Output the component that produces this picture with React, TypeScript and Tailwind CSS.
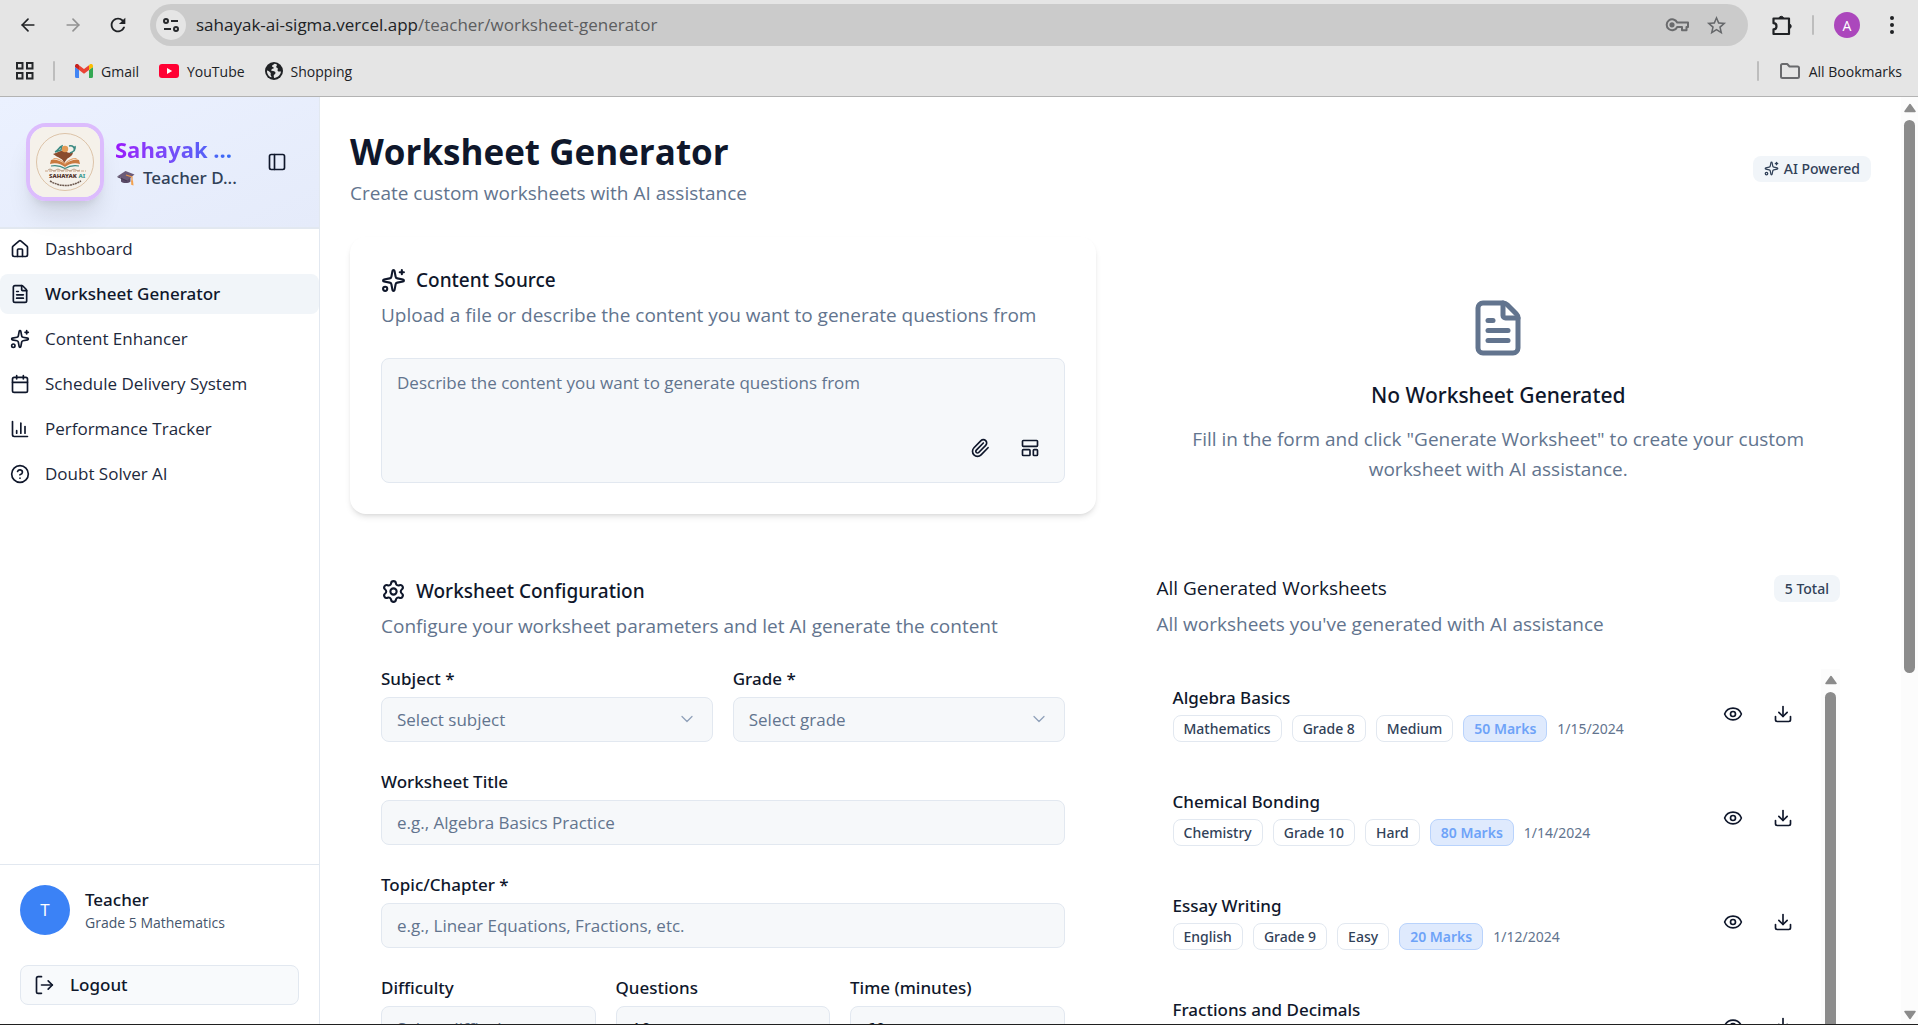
import React from "react";
import {
  ArrowLeft,
  ArrowRight,
  Calendar,
  ChartColumn,
  ChevronDown,
  CircleQuestionMark,
  Download,
  Eye,
  FileText,
  House,
  LayoutTemplate,
  PanelLeft,
  Paperclip,
  Settings,
} from "lucide-react";
import { MdOutlineStarBorder, MdRefresh } from "react-icons/md";

const SparkleIcon = ({ className }: { className: string }) => (
  <svg viewBox="0 0 24 24" className={className} fill="none" stroke="currentColor" strokeWidth="2" strokeLinecap="round" strokeLinejoin="round" aria-hidden="true">
    <path d="M11.017 2.814a1 1 0 0 1 1.966 0l1.051 5.558a2 2 0 0 0 1.594 1.594l5.558 1.051a1 1 0 0 1 0 1.966l-5.558 1.051a2 2 0 0 0-1.594 1.594l-1.051 5.558a1 1 0 0 1-1.966 0l-1.051-5.558a2 2 0 0 0-1.594-1.594l-5.558-1.051a1 1 0 0 1 0-1.966l5.558-1.051a2 2 0 0 0 1.594-1.594z" />
    <path d="M20 2v4" />
    <path d="M22 4h-4" />
    <circle cx="4" cy="20" r="2" />
  </svg>
);

const TuneIcon = () => (
  <svg viewBox="0 0 18 18" className="size-[18px]" fill="none" stroke="#26282b" strokeWidth="2" aria-hidden="true">
    <circle cx="4" cy="5" r="2" />
    <path d="M9 5h7M2 13h7" />
    <circle cx="14" cy="13" r="2" />
  </svg>
);

const KeyIcon = () => (
  <svg viewBox="0 0 24 16" className="h-4 w-6" fill="none" stroke="#6a6b6d" strokeWidth="2" strokeLinejoin="round" aria-hidden="true">
    <path d="M12.2 5.5A5.5 5.5 0 1 0 12.2 10H17v3.2h4.500V10H23V5.500z" />
    <circle cx="7" cy="7.800" r="1.600" fill="#6a6b6d" />
  </svg>
);

const PuzzleIcon = () => (
  <svg viewBox="0 0 24 24" className="size-6" fill="none" stroke="#202225" strokeWidth="2.200" strokeLinejoin="round" aria-hidden="true">
    <path d="M3.500 5.500h15.500v15.500h-15.500v-4.600c2 0 3-1.400 3-3.100s-1-3.100-3-3.100z" />
    <path d="M9 5a2.400 2.400 0 0 1 4.600 0M19.500 11a2.400 2.400 0 0 1 0 4.600" fill="#202225" strokeWidth="1" />
  </svg>
);

const AppsIcon = () => (
  <svg viewBox="0 0 20 20" className="size-5" fill="none" stroke="#26282b" strokeWidth="2" aria-hidden="true">
    <rect x="2" y="2" width="5.500" height="5.500" />
    <rect x="12" y="2" width="5.500" height="5.500" />
    <rect x="2" y="12" width="5.500" height="5.500" />
    <rect x="12" y="12" width="5.500" height="5.500" />
  </svg>
);

const GmailIcon = () => (
  <svg viewBox="0 0 18 14" className="h-3.5 w-[18px]" aria-hidden="true">
    <path d="M0 3v9.500A1.500 1.500 0 0 0 1.500 14H4V6z" fill="#4285f4" />
    <path d="M18 3v9.500a1.500 1.500 0 0 1-1.500 1.500H14V6z" fill="#34a853" />
    <path d="M14 1.500V6l4-3V2A2 2 0 0 0 14.600.500z" fill="#fbbc04" />
    <path d="M4 6V1.200L9 5l5-3.800V6L9 9.800z" fill="#ea4335" />
    <path d="M0 2v1l4 3V1.200L3.400.500A2 2 0 0 0 0 2z" fill="#c5221f" />
  </svg>
);

const YouTubeIcon = () => (
  <svg viewBox="0 0 20 14" className="h-3.5 w-5" aria-hidden="true">
    <rect width="20" height="14" rx="3" fill="#ff0033" />
    <path d="M8 4l5.200 3L8 10z" fill="#fff" />
  </svg>
);

const GlobeIcon = () => (
  <svg viewBox="0 0 18 18" className="size-[18px]" aria-hidden="true">
    <circle cx="9" cy="9" r="9" fill="#202225" />
    <path d="M9.500 1.800c-1 1-2.700 1.200-2.500 2.500.1.900 1.500.5 1.700 1.500.2 1.200-2.400 1-2.500 2.500-.1 1.200 2.800.6 3.800 1.500 1 .9.400 2.300-.6 2.800-.9.500-.8 2-.3 3.400 3.500-.2 6.500-2.700 6.900-6.400-1.400-.4-2.400.4-3.200-.6-.7-.9.300-1.700 0-2.600-.3-.8-1.500-.5-1.600-1.500 0-1 .9-1.200.9-2.100-.8-.6-1.600-.9-2.600-1z" fill="#e5e5e5" />
    <path d="M2 8.400c1.200.1 2.700 1.400 3.500 2.300.8 1-.3 1.700.3 2.700.3.500.8 1.200.7 1.900C3.700 14.400 1.700 11.500 2 8.400z" fill="#e5e5e5" />
  </svg>
);

const FolderIcon = () => (
  <svg viewBox="0 0 22 18" className="h-[18px] w-[22px]" fill="none" stroke="#696a6d" strokeWidth="2" strokeLinejoin="round" aria-hidden="true">
    <path d="M2 3.500A1.500 1.500 0 0 1 3.500 2h4.700l2.300 2.500h8A1.500 1.500 0 0 1 20 6v8.500a1.500 1.500 0 0 1-1.500 1.500h-15A1.500 1.500 0 0 1 2 14.500z" />
  </svg>
);

const CapIcon = () => (
  <svg viewBox="0 0 18 16" className="h-4 w-[18px] shrink-0" aria-hidden="true">
    <path d="M4 7v4.500c2 2 7.500 2 9.500 0V7z" fill="#5a4a66" />
    <path d="M.5 6.200L8.500 1l9 3.600-7.500 6z" fill="#6b5b78" />
    <path d="M.5 6.200L10 10.600v1L.5 7.200z" fill="#463952" />
    <path d="M9 5l6 2v5" stroke="#e8964a" strokeWidth="1.200" fill="none" />
    <path d="M14.200 10.500h1.800l.5 5-2.300-.8z" fill="#f3a24f" />
  </svg>
);

const SahayakLogo = () => (
  <svg viewBox="0 0 70 70" className="size-full" role="img" aria-label="Sahayak AI logo">
    <rect width="70" height="70" fill="#f5f1ea" />
    <circle cx="35" cy="35" r="28.500" fill="none" stroke="#dcc3a8" strokeWidth="1" />
    <path d="M20 37c6-2 11 0 15 3 4-3 9-5 15-3l-1-4c-5-1-10 1-14 4-4-3-9-5-14-4z" fill="#c9793f" />
    <path d="M22 33c5-2 10 1 13 5 3-4 8-7 13-5l-2-2c-5 0-8 2-11 5-3-3-6-5-11-5z" fill="#e3a26c" />
    <path d="M21 39c6-1 10 0 14 2.500 4-2.500 8-3.500 14-2.500" fill="none" stroke="#3d8b83" strokeWidth="1.200" />
    <path d="M23 27c5-1 7-4 11-3 3 1 6 3 9 1 0 4-4 5-6 7l-3 4c-1-5-6-5-11-9z" fill="#8a4b2e" />
    <path d="M25 25c3-1 4-5 7-6l-1 4zM40 26c3-1 6-3 5-7M39 19c4-1 6 2 5 4" fill="none" stroke="#3d8b83" strokeWidth="1.500" />
    <circle cx="35" cy="22" r="3.200" fill="#e39a55" />
    <path d="M15 44h41" stroke="#c9a487" strokeWidth="1" strokeDasharray="3 1" />
    <path d="M18 43q2-2 4 0t4 0 4 0 4 0 4 0 4 0 4 0 4 0" stroke="#bba08a" strokeWidth="1" fill="none" />
    <text x="19" y="51" fontFamily="Noto Sans, sans-serif" fontSize="6" fontWeight="800" fill="#4b2c24">
      SAHAYAK <tspan fill="#3d9a90">AI</tspan>
    </text>
    <path d="M20 54q15 9 31 0" fill="none" stroke="#6d5a50" strokeWidth="1.500" strokeDasharray="2 .600" />
  </svg>
);

const bookmarks = [
  { label: "Gmail", icon: <GmailIcon /> },
  { label: "YouTube", icon: <YouTubeIcon /> },
  { label: "Shopping", icon: <GlobeIcon /> },
];

function BrowserChrome() {
  return (
    <header className="shrink-0 border-b border-[#b3b3b3] bg-[#e5e5e5] text-[#202225]">
      <div className="flex items-center pt-1 pl-[18px]">
        <button aria-label="Back" className="flex w-[45px]"><ArrowLeft className="size-5" /></button>
        <button aria-label="Forward" className="flex w-11 text-[#929292]"><ArrowRight className="size-5" /></button>
        <button aria-label="Reload" className="flex w-[43px]"><MdRefresh className="size-[22px]" /></button>
        <div className="flex h-[42px] flex-1 items-center rounded-full bg-[#cbcbcb] pr-5 pl-1.5">
          <button aria-label="Site information" className="flex size-[30px] items-center justify-center rounded-full bg-[#e5e5e5]"><TuneIcon /></button>
          <p className="ml-2.5 flex-1 text-[17px] leading-6">
            sahayak-ai-sigma.vercel.app<span className="text-[#5c5d5f]">/teacher/worksheet-generator</span>
          </p>
          <button aria-label="Passwords" className="mr-4"><KeyIcon /></button>
          <button aria-label="Bookmark this page" className="text-[#66686b]"><MdOutlineStarBorder className="size-[23px]" /></button>
        </div>
        <button aria-label="Extensions" className="ml-[22px]"><PuzzleIcon /></button>
        <span className="ml-[18px] h-5 w-0.5 rounded bg-[#bdbdbd]" />
        <button aria-label="Profile" className="ml-5 flex size-[26px] items-center justify-center rounded-full bg-[#ab47bc] text-[14px] text-white">A</button>
        <button aria-label="Menu" className="mr-4 ml-[22px] flex w-5 flex-col items-center gap-[3px]">
          <span className="size-1 rounded-full bg-[#202225]" />
          <span className="size-1 rounded-full bg-[#202225]" />
          <span className="size-1 rounded-full bg-[#202225]" />
        </button>
      </div>
      <nav aria-label="Bookmarks" className="flex h-[50px] items-center pr-4 pl-[15px] text-[14px]">
        <button aria-label="Apps"><AppsIcon /></button>
        <span className="mr-5 ml-[18px] h-5 w-0.5 rounded bg-[#bdbdbd]" />
        <ul className="flex flex-1 items-center gap-5">
          {bookmarks.map((b) => (
            <li key={b.label}>
              <a href="#" className="flex items-center gap-2">{b.icon}{b.label}</a>
            </li>
          ))}
        </ul>
        <span className="mr-5 h-5 w-0.5 rounded bg-[#bdbdbd]" />
        <button className="flex items-center gap-2"><FolderIcon />All Bookmarks</button>
      </nav>
    </header>
  );
}

const navItems = [
  { label: "Dashboard", Icon: House },
  { label: "Worksheet Generator", Icon: FileText, active: true },
  { label: "Content Enhancer", Icon: SparkleIcon },
  { label: "Schedule Delivery System", Icon: Calendar },
  { label: "Performance Tracker", Icon: ChartColumn },
  { label: "Doubt Solver AI", Icon: CircleQuestionMark },
];

function Sidebar() {
  return (
    <aside className="flex w-80 shrink-0 flex-col border-r border-slate-200">
      <div className="flex items-center border-b-2 border-slate-200 bg-gradient-to-br from-[#ebf1ff] to-[#e5ebfa] py-[26px] pr-8 pl-[26px]">
        <div className="size-[78px] shrink-0 overflow-hidden rounded-[20px] border-4 border-[#dcbcfd] shadow-xl">
          <SahayakLogo />
        </div>
        <div className="ml-[11px] pt-1">
          <p className="w-fit bg-gradient-to-r from-[#9a12fb] to-[#2f6bf6] bg-clip-text text-[22px] leading-7 font-bold whitespace-nowrap text-transparent">Sahayak ...</p>
          <p className="ml-0.5 flex items-center gap-2 font-['Noto_Sans',sans-serif] text-[17px] leading-[30px] font-medium whitespace-nowrap text-slate-700">
            <CapIcon />
            <span>Teacher D...</span>
          </p>
        </div>
        <button aria-label="Toggle sidebar" className="ml-auto"><PanelLeft className="size-5" /></button>
      </div>
      <nav aria-label="Main" className="flex flex-1 flex-col gap-[5px]">
        {navItems.map(({ label, Icon, active }) => (
          <a
            key={label}
            href="#"
            className={
              active
                ? "flex h-10 items-center gap-[15px] rounded-lg bg-slate-100 px-2.5 font-['Noto_Sans',sans-serif] text-[17px] font-medium"
                : "flex h-10 items-center gap-[15px] rounded-lg px-2.5 text-[17px] text-slate-800"
            }
          >
            <Icon className="size-5 text-slate-900" />
            {label}
          </a>
        ))}
      </nav>
      <div className="border-t border-slate-200 px-5 pt-5 pb-[19px]">
        <div className="mb-[30px] flex items-center gap-[15px]">
          <div className="flex size-[50px] items-center justify-center rounded-full bg-[#3b82f6] text-[17px] text-white">T</div>
          <div className="pt-0.5">
            <p className="font-['Noto_Sans',sans-serif] text-[17px] leading-6 font-medium">Teacher</p>
            <p className="text-[14px] leading-[22px] text-slate-600">Grade 5 Mathematics</p>
          </div>
        </div>
        <button className="flex h-10 w-full items-center gap-4 rounded-lg border border-slate-200 bg-slate-50 px-[13px] font-['Noto_Sans',sans-serif] text-[17px] font-medium">
          <svg viewBox="0 0 24 24" className="size-5" fill="none" stroke="currentColor" strokeWidth="2" strokeLinecap="round" strokeLinejoin="round" aria-hidden="true">
            <path d="m17 17 5-5-5-5" />
            <path d="M22 12H9" />
            <path d="M9 22H5a2 2 0 0 1-2-2V4a2 2 0 0 1 2-2h4" />
          </svg>
          Logout
        </button>
      </div>
    </aside>
  );
}

const labelClass = "block font-['Noto_Sans',sans-serif] text-[17px] leading-[25px] font-medium";

const controlClass =
  "mt-1.5 block h-[45px] w-full appearance-none rounded-lg border border-slate-200 bg-[#f6f8fa] px-[15px] text-[17px] placeholder:text-slate-500";

function SelectField({ id, label, placeholder }: { id: string; label: string; placeholder: string }) {
  return (
    <div className="flex-1">
      <label htmlFor={id} className={labelClass}>{label}</label>
      <div className="relative">
        <select id={id} className={controlClass + " text-slate-500"}>
          <option>{placeholder}</option>
        </select>
        <ChevronDown className="pointer-events-none absolute top-3 right-4 size-5 text-slate-400" strokeWidth={1.5} />
      </div>
    </div>
  );
}

function InputField({ id, label, placeholder, value }: { id: string; label: string; placeholder?: string; value?: string }) {
  return (
    <div className="flex-1">
      <label htmlFor={id} className={labelClass}>{label}</label>
      <input id={id} placeholder={placeholder} defaultValue={value} className={controlClass} />
    </div>
  );
}

const worksheets = [
  { title: "Algebra Basics", tags: ["Mathematics", "Grade 8", "Medium"], marks: 50, date: "1/15/2024" },
  { title: "Chemical Bonding", tags: ["Chemistry", "Grade 10", "Hard"], marks: 80, date: "1/14/2024" },
  { title: "Essay Writing", tags: ["English", "Grade 9", "Easy"], marks: 20, date: "1/12/2024" },
  { title: "Fractions and Decimals", tags: ["Mathematics", "Grade 5", "Easy"], marks: 30, date: "1/10/2024" },
];

const Triangle = ({ className }: { className: string }) => (
  <svg viewBox="0 0 12 10" className={className} aria-hidden="true">
    <path d="M6 1.500L11 8.500H1z" fill="#8b8b8b" stroke="#8b8b8b" strokeWidth="1.500" strokeLinejoin="round" />
  </svg>
);

function WorksheetList() {
  return (
    <section className="border border-transparent px-[30px] pt-[30px]">
      <div className="flex h-[27px] items-center justify-between">
        <h2 className="text-[19px]">All Generated Worksheets</h2>
        <span className="rounded-lg bg-slate-100 px-[11px] font-['Noto_Sans',sans-serif] text-[14px] leading-[27px] font-medium text-slate-700">5 Total</span>
      </div>
      <p className="mt-2 text-[19px] leading-7 text-slate-500">All worksheets you've generated with AI assistance</p>
      <div className="mt-[31px] flex">
        <ul className="flex flex-1 flex-col gap-[15px]">
          {worksheets.map((w) => (
            <li key={w.title} className="flex items-center justify-between p-4">
              <div>
                <h3 className="font-['Noto_Sans',sans-serif] text-[17px] leading-[26px] font-medium">{w.title}</h3>
                <div className="mt-1 flex items-center gap-2.5 font-['Noto_Sans',sans-serif] text-[14px] leading-[25px]">
                  {w.tags.map((t) => (
                    <span key={t} className="rounded-lg border border-slate-200 px-2.5 font-medium text-slate-700">{t}</span>
                  ))}
                  <span className="rounded-lg border border-[#b9d3fc] bg-[#dfeafd] px-2.5 font-semibold text-[#6ea3f8]">{w.marks} Marks</span>
                  <span className="text-slate-500">{w.date}</span>
                </div>
              </div>
              <div className="flex gap-[30px] pr-3">
                <button aria-label={"View " + w.title}><Eye className="size-5" /></button>
                <button aria-label={"Download " + w.title}><Download className="size-5" /></button>
              </div>
            </li>
          ))}
        </ul>
        <div className="flex w-[19px] flex-col items-center bg-[#fcfcfc] pt-1.5" aria-hidden="true">
          <Triangle className="h-2.5 w-3" />
          <div className="mt-[7px] w-[11px] flex-1 rounded-full bg-[#8b8b8b]" />
        </div>
      </div>
    </section>
  );
}

export default function App() {
  return (
    <div className="flex h-screen flex-col overflow-hidden border-b border-[#202020] bg-white font-['Open_Sans',sans-serif] text-slate-900">
      <BrowserChrome />
      <div className="flex min-h-0 flex-1">
        <Sidebar />
        <main className="min-w-0 flex-1 overflow-hidden p-[30px]">
          <div className="mb-[27px] flex items-center justify-between">
            <div>
              <h1 className="text-[35px] leading-[50px] font-bold">Worksheet Generator</h1>
              <p className="text-[19px] leading-[33px] text-slate-500">Create custom worksheets with AI assistance</p>
            </div>
            <span className="flex h-[26px] items-center gap-[5px] rounded-lg bg-slate-100 px-[11px] font-['Noto_Sans',sans-serif] text-[14px] font-medium text-slate-700">
              <SparkleIcon className="size-[15px]" />
              AI Powered
            </span>
          </div>
          <div className="grid grid-cols-2 gap-[30px]">
            <div className="flex flex-col gap-[34px]">
              <section className="rounded-2xl border border-transparent p-[30px] shadow-md">
                <h2 className="flex h-[25px] items-center gap-2.5 font-['Noto_Sans',sans-serif] text-[19px] font-medium">
                  <SparkleIcon className="size-[25px]" />
                  Content Source
                </h2>
                <p className="mt-2 text-[19px] leading-7 text-slate-500">Upload a file or describe the content you want to generate questions from</p>
                <div className="relative mt-[29px]">
                  <textarea
                    aria-label="Content description"
                    placeholder="Describe the content you want to generate questions from"
                    className="block h-[125px] w-full resize-none rounded-lg border border-slate-200 bg-[#f6f8fa] px-[15px] py-2.5 text-[17px] leading-[27px] placeholder:text-slate-500"
                  />
                  <div className="absolute right-[25px] bottom-[25px] flex gap-[30px]">
                    <button aria-label="Attach file"><Paperclip className="size-5" /></button>
                    <button aria-label="Templates"><LayoutTemplate className="size-5" /></button>
                  </div>
                </div>
              </section>
              <section className="border border-transparent px-[30px] pt-[30px]">
                <h2 className="flex h-[25px] items-center gap-2.5 font-['Noto_Sans',sans-serif] text-[19px] font-medium">
                  <Settings className="size-[25px]" />
                  Worksheet Configuration
                </h2>
                <p className="mt-2 text-[19px] leading-7 text-slate-500">Configure your worksheet parameters and let AI generate the content</p>
                <form className="mt-[26px] flex flex-col gap-[27px]">
                  <div className="flex gap-5">
                    <SelectField id="subject" label="Subject *" placeholder="Select subject" />
                    <SelectField id="grade" label="Grade *" placeholder="Select grade" />
                  </div>
                  <InputField id="title" label="Worksheet Title" placeholder="e.g., Algebra Basics Practice" />
                  <InputField id="topic" label="Topic/Chapter *" placeholder="e.g., Linear Equations, Fractions, etc." />
                  <div className="grid grid-cols-3 gap-5">
                    <InputField id="difficulty" label="Difficulty" placeholder="Select difficulty" />
                    <InputField id="questions" label="Questions" value="10" />
                    <InputField id="time" label="Time (minutes)" value="60" />
                  </div>
                </form>
              </section>
            </div>
            <div className="flex flex-col gap-[30px]">
              <section className="flex flex-col items-center border border-transparent px-[30px] pt-[60px] pb-[29px] text-center">
                <FileText className="size-[60px] text-slate-500" />
                <h2 className="mt-5 font-['Noto_Sans',sans-serif] text-[21px] leading-[35px] font-medium">No Worksheet Generated</h2>
                <p className="mt-[11px] max-w-[640px] text-[19px] leading-[30px] text-slate-500">
                  Fill in the form and click "Generate Worksheet" to create your custom worksheet with AI assistance.
                </p>
              </section>
              <WorksheetList />
            </div>
          </div>
        </main>
        <div className="flex w-[17px] shrink-0 flex-col items-center bg-[#fcfcfc] pt-1.5 pb-1" aria-hidden="true">
          <Triangle className="h-2.5 w-3" />
          <div className="mt-[7px] w-[11px] flex-[552] rounded-full bg-[#8b8b8b]" />
          <div className="flex-[336]" />
          <Triangle className="h-2.5 w-3 rotate-180" />
        </div>
      </div>
    </div>
  );
}
